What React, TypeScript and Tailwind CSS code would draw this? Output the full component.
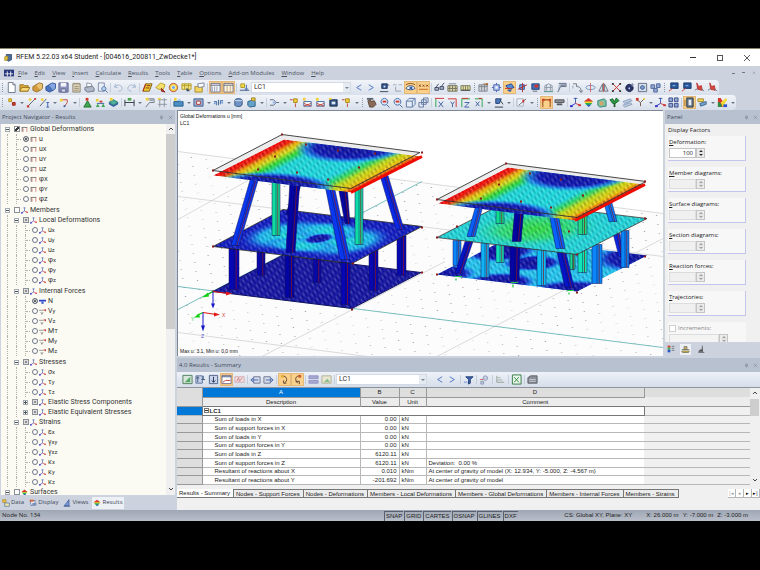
import React from 'react';

type Shape = [d: string, fill: string, stroke?: string];

// All glyphs are drawn on a 12x12 grid
const GLYPHS: Record<string, Shape[]> = {
    newDoc: [['M2.500 .5H7.500L10 3V11.500H2.500Z', '#fff', '#6b7484'], ['M7.500 .5V3H10', '#dde3ee', '#6b7484']],
    open: [['M1 3H5L6 4H10V10H1Z', '#d9a93a', '#9c7722'], ['M1 10L3 6H12L9.500 10Z', '#f7d777', '#9c7722']],
    boxGold: [['M1 5L5 3L9 4V9L5 11L1 9Z', '#d29a3c', '#9b7026'], ['M4 3L8 1L11.500 2V7L9 9', '#e9c272', '#9b7026']],
    boxBlue: [['M1 5L5 3L9 4V9L5 11L1 9Z', '#4a72bd', '#34559a'], ['M4 3L8 1L11.500 2V7L9 9', '#86a6de', '#34559a']],
    save: [['M1 1H11V11H1Z', '#8d93bd', '#5b628e'], ['M3 1H9V5H3Z', '#f4f5fb'], ['M3.500 7.500H8.500V11H3.500Z', '#d6d9e8', '#5b628e']],
    notes: [['M2 2H10V11H2Z', '#ded5bd', '#8b8371'], ['M2 1.500H10M3.500 5H8.500M3.500 7H8.500M3.500 9H8.500', 'none', '#9c9276']],
    printer: [['M3 1L8 2L9 6L3 5Z', '#fff', '#8990a3'], ['M1 6L9 4.500L11 7V10L4 11L1 9Z', '#b0b7c7', '#70788a']],
    preview: [['M1.500 1H8V10H1.500Z', '#e9eff8', '#7d8ba6'], ['M7.500 5A2.300 2.300 0 1 1 7.400 5M9 9L11.500 11.500', '#b5d2ef', '#4d6e9d']],
    undo: [['M3 2L1.500 5.500L5 6M2 5.300C5 2 9.500 3 10 7C10 9 8 10 6 10', 'none', '#9fb2d0']],
    redo: [['M9 2L10.500 5.500L7 6M10 5.300C7 2 2.500 3 2 7C2 9 4 10 6 10', 'none', '#9fb2d0']],
    sheet: [['M4 2H11L8 10H1Z', '#f2cf2d', '#7a5a18'], ['M5 4H9M4 6.500H8', 'none', '#7a2323'], ['M1 10L4 2', 'none', '#b51f1f']],
    lasso: [['M1 6L6 1L11 3L9 8L4 8Z', '#f3df6c', '#b99a20'], ['M7 7L11 11L7 10Z', '#cf3c2c', '#8a221a']],
    ring: [['M6 1.500A4.500 4.500 0 1 1 5.900 1.500', '#f1d33e', '#b33c2c'], ['M6 4A2 2 0 1 1 5.900 4', '#6d9de0', '#fff']],
    tableY: [['M1 2H11V8H1Z', '#f7e98b', '#b19b24'], ['M1 4H11M4 2V8M8 2V8', 'none', '#b19b24'], ['M6 6L10 10H6Z', '#44505f']],
    folderY: [['M1 5H9V11H1Z', '#f2d561', '#a7892c'], ['M4 2L11 1V5L5 6Z', '#fff', '#7a8598']],
    tableA: [['M1 1.500H11V11H1Z', '#f4f5f9', '#6b6f85'], ['M1 3.500H11', 'none', '#596080'], ['M2.500 5V11M5 5V11M7.500 5V11', 'none', '#9aa0b6']],
    tableB: [['M1 1.500H11V11H1Z', '#fdf5e2', '#6b6f85'], ['M1 3.500H11', 'none', '#596080'], ['M4.500 4V11M8 4V11', 'none', '#bfa67a']],
    loadCase: [['M2 2H6V6H2Z', '#f2de44', '#ae9621'], ['M1 9H11', 'none', '#3f567e'], ['M8 3V8M6.500 7L8 9L9.500 7', 'none', '#3b5ea1']],
    prev: [['M9 3L4 6L9 9', 'none', '#4672c4']],
    next: [['M3 3L8 6L3 9', 'none', '#4672c4']],
    eyeBlue: [['M3 2H9V7H3Z', '#35548a', '#1f3763'], ['M1 10.500H10M9 2L11 4', 'none', '#333f58'], ['M5 4H7V6H5Z', '#cfe0fa']],
    dims: [['M1 3H5M7 3H11', 'none', '#a5adbb'], ['M4 5V10H10', 'none', '#98a1b0']],
    eye: [['M1 7C3 3 9 3 11 7C9 9 3 9 1 7Z', '#f3f7ff', '#40517a'], ['M5 5H8V8H5Z', '#2f62b0'], ['M1 3C4 1 8 1 11 3', 'none', '#864f1e']],
    xxx: [['M1 3L3 5M3 3L1 5M5 3L7 5M7 3L5 5M9 3L11 5M11 3L9 5', 'none', '#7d3a14'], ['M1 8H11', 'none', '#c1651d']],
    glasses: [['M1 6H5V9H1ZM6.500 5H10.500V8H6.500Z', '#aeb7c9', '#3e4862'], ['M2 6L5 2M8 5L11 1', 'none', '#3e4862']],
    building: [['M1 4H11V10H1Z', '#ece4ae', '#6a6f5c'], ['M3 4V10M6 4V10M9 4V10M1 7H11', 'none', '#6a6f5c'], ['M2 2H10', 'none', '#7f8590']],
    ladder: [['M1 4H11V9H1Z', '#e8e2a5', '#777c62'], ['M3.500 4V9M6 4V9M8.500 4V9', 'none', '#777c62'], ['M1 9H11', 'none', '#444']],
    tableG: [['M1 3H10V10H1Z', '#d1d4da', '#7e838e'], ['M1 5H10M4 3V10M7 3V10', 'none', '#7e838e'], ['M5 2L11 1V4Z', '#a37345']],
    target: [['M6 1V11M1 6H11', 'none', '#4461ad'], ['M3 3H9V9H3Z', '#b8c7ef', '#4461ad'], ['M5 5H7V7H5Z', '#fff']],
    planeRed: [['M2 4L8 2L11 6L5 8Z', '#5a8bd6', '#234b8f'], ['M1 7H8', 'none', '#cb2d25'], ['M3 9L9 8L7 11Z', '#35609f']],
    planeBlue: [['M3 3H8V8H3Z', '#7ba5e0', '#274d8e'], ['M6 1V11M1 8L11 3', 'none', '#b32a2a']],
    gridRed: [['M2 2H10V8H2Z', '#466db2', '#23427c'], ['M5 3H9V6H5Z', '#d7342b'], ['M3 10H8', 'none', '#5c6473']],
    frame: [['M2 10V4L6 2L10 4V10M2 6H10M4 3V10M8 3V10', 'none', '#8d97a8'], ['M1 10.500H11', 'none', '#4d907f']],
    flag: [['M3 1.500H11V5H5L2 11', '#b8c4d6', '#5f6c80'], ['M5 3.500H10', 'none', '#5f6c80']],
    curve: [['M1 2H5V5M5 5C9 5 10 7 10 11M8 9L10 11.500L12 9', 'none', '#6a7280'], ['M1 4V7', 'none', '#989da7']],
    rotate: [['M1 6C1 3 11 3 11 6C11 9 1 9 1 6Z', 'none', '#6c8fc7'], ['M6 1V11', 'none', '#c66']],
    mirror: [['M5 2V10H1ZM7 2V10H11Z', '#dde1e8', '#6a7280'], ['M6 1V11', 'none', '#c05c50']],
    cross: [['M2 2L10 10M10 2L2 10', 'none', '#d02c23'], ['M1 1H3V3H1ZM9 1H11V3H9ZM1 9H3V11H1ZM9 9H11V11H9Z', '#343434']],
    sphere: [['M6 2.500A4 4 0 1 1 5.900 2.500', '#27346b', '#151d42'], ['M9 1V5M7 3H11', 'none', '#808ca8'], ['M5 6H6.500V8H5Z', '#dfe6fa']],
    zoomBox: [['M1.500 1.500H10.500V10.500H1.500Z', '#d6deec', '#606d86'], ['M6 4A2 2 0 1 1 5.900 4', '#7ba3df', '#27456f']],
    cluster: [['M1 3H5V7H1ZM7 2H11V6H7ZM4 7H8V11H4Z', '#8fa5d0', '#51699e']],
    flagBlue: [['M3 1H11V7H3Z', '#27569b', '#183a70'], ['M1 10L5 7', 'none', '#d83b30'], ['M5 4L8 4', 'none', '#a8c4ea']],
    loadRed: [['M3 1L5 5L8 4L9 9L4 8Z', '#d9453c', '#b8382f'], ['M1 9L4 7M8 7L11 10', 'none', '#6d7584']],
    node: [['M3 2H6V5H3Z', '#f1cf39', '#b59115'], ['M7 6H10V9H7Z', '#d63c2f', '#9a231a']],
    line: [['M2 10L10 2', 'none', '#555d6b'], ['M1 9H3.500V11.500H1ZM9 1H11V3H9Z', '#cf3b30'], ['M3 1.500H6V4H3Z', '#f1cf39']],
    lineI: [['M1 10L8 2', 'none', '#555d6b'], ['M8 6H11M9.500 6V11M8 11H11', 'none', '#3c64b2'], ['M2 1.500H5V4H2Z', '#f1cf39']],
    poly: [['M2 3H9V6L6 10', 'none', '#c14437'], ['M1 2H4V5H1Z', '#f1cf39'], ['M5 9H7V11H5Z', '#35609f']],
    support: [['M6 4L10 11H2Z', '#3da851', '#20702f'], ['M4 1H7V4H4Z', '#d6382d']],
    hinge: [['M2 7H10', 'none', '#35609f'], ['M1 2H4V5H1Z', '#f1cf39'], ['M3 7L5 11H1ZM9 7L11 11H7Z', '#3da851'], ['M5 4H8V6H5Z', '#cf3b30']],
    solid: [['M1 6L6 3L11 6L6 9Z', '#4cb09c', '#277866'], ['M1 6V8L6 11L11 8V6L6 9Z', '#35609f'], ['M2 1H5V4H2Z', '#f1cf39']],
    dimension: [['M1 3V10M11 3V10M1 6H11', 'none', '#2e333d'], ['M4 1H8V4H4Z', '#4ca54c']],
    comment: [['M4 2H11V6H6L2 11', 'none', '#6a7280'], ['M2 1H5V4H2Z', '#f1cf39'], ['M6 3.500H10', 'none', '#6a7280']],
    raster: [['M3 1V11M8 1V11M1 3H11M1 8H11', 'none', '#8b93a2'], ['M1 1H4V3H1Z', '#f1cf39']],
    surf: [['M1 5H11V10H1Z', '#4b8fc4', '#245a88'], ['M1 1H4V4H1Z', '#f1cf39'], ['M4 4L7 2L10 5', '#9cc7e4']],
    opening: [['M1 2H11V10H1Z', '#95add2', '#3e5c8c'], ['M4 4.500H8V8H4Z', '#fff', '#b5342b']],
    wave: [['M1 5H4V9M6 9V3M8 8V4H11', 'none', '#3d6299'], ['M1 6H3V8H1ZM9 5H11V7H9Z', '#6da2d9']],
    pot: [['M2 4C2 1 10 1 10 4V8C10 11 3 11 2 9Z', '#7193c4', '#33547f'], ['M2 4H10', 'none', '#d7e3f5']],
    cubeSel: [['M2 5L8 3L10 5V10L4 11L2 9Z', '#65a2cb', '#2a5c80'], ['M6 1H10V4H6Z', '#e3ca58', '#9c8320']],
    connect: [['M1 3H5L8 6L5 9H1M8 6H11', 'none', '#596680'], ['M4 5H7V7H4Z', '#8fb3e6']],
    pinY: [['M5 2H9V6H5Z', '#f1cf39', '#a8881a'], ['M7 7V11', 'none', '#c14437'], ['M1 3H4', 'none', '#b33']],
    loadY: [['M2 5H10V10H2Z', '#fff', '#35609f'], ['M2 7L10 10M2 10L10 7', 'none', '#c14437'], ['M1 1H4V4H1Z', '#f1cf39']],
    camera: [['M2 3H10V10H2Z', '#31517d', '#182f52'], ['M4 5H8V8H4Z', '#d6e6fa'], ['M1 1H4V3H1Z', '#f1cf39']],
    hand: [['M2 4L5 2V5L9 4L11 8L8 11H4Z', '#8a6a55', '#5a463a'], ['M1 1H8V3H1Z', '#5d646f']],
    magn: [['M6 1.500A3.700 3.700 0 1 1 5.900 1.500', '#dbe8f7', '#3f68a5'], ['M8.500 8.500L11.500 11.500', 'none', '#3f68a5'], ['M4 4H8V6H4Z', '#d0342a']],
    box3d: [['M1.500 4.500H8V11H1.500ZM1.500 4.500L4.500 1.500H11V8L8 11M8 4.500L11 1.500', '#e6edf8', '#5674a5']],
    boxes: [['M1 6H6V11H1ZM4 3H9V8H4ZM6 1H11V6H6Z', '#dfe7f4', '#64799f']],
    axX: [['M2 2V11', 'none', '#24a04a'], ['M1 1.500H11', 'none', '#cf2d2d'], ['M5 5L10 11M10 5L5 11', 'none', '#385c9c']],
    axY: [['M1 2H10V11', 'none', '#cf2d2d'], ['M4 5L6 8L8 5M6 8V11', 'none', '#385c9c']],
    axZ: [['M2 11V2H11', 'none', '#24a04a'], ['M2 1.500H9', 'none', '#cf2d2d'], ['M5 6H10L5 11H10', 'none', '#385c9c']],
    axXn: [['M10 11V2H2', 'none', '#24a04a'], ['M6 1.500H10', 'none', '#cf2d2d'], ['M3 5L7 10M7 5L3 10', 'none', '#385c9c']],
    micro: [['M3 2H9L7 7H3Z', '#4c7abc', '#203f6e'], ['M2 11H11M8 4L11 8', 'none', '#2c3442']],
    vector: [['M1 2H8V10H1Z', '#eef2f8', '#a6aebc'], ['M3 9L11 2', 'none', '#5f6672'], ['M7 3H9V6H7Z', '#cf3b30']],
    portal: [['M2 11V3H10V11', 'none', '#8a3a18'], ['M1 2H4V4H1ZM9 2H11V4H9Z', '#cf3b30'], ['M1 6C4 2 8 2 11 6', 'none', '#c0641e']],
    roller: [['M1 3H11V6H1Z', '#8e9096', '#55585f'], ['M3 7H9V9H3Z', '#55585f']],
    axis: [['M6 1V7M4 1.500H8', 'none', '#3d56a8'], ['M6 7L1 10', 'none', '#3232c8'], ['M6 7L11 9', 'none', '#d03434'], ['M0 9H3V11H0Z', '#3232c8'], ['M9 8H12V10H9Z', '#d03434']],
    rainbow: [['M1 5L6 1L11 5L9 6H3Z', '#d8352c'], ['M1 5H11L9 7H3Z', '#e9d736'], ['M2 6.500H10L8 9H4Z', '#2fae4e'], ['M4 8.500H9L6 11Z', '#2a55c4']],
    cubeG: [['M2 4L9 2L11 4V10L4 11L2 9Z', '#7ac3a8', '#3a826d'], ['M4 5H8V9H4Z', '#d8a466']],
    tree: [['M5 5H7V11H5Z', '#2c5b33'], ['M1 3L4 2L6 5L8 1L11 4L7 7H4Z', '#2f9a45', '#1d6a2c']],
    layers: [['M1 5L9 2L11 4L3 7ZM1 9L9 6L11 8L3 11Z', '#b9c9e0', '#8fa1bf']],
    branch: [['M2 3L6 6L10 2M6 6V10', 'none', '#6b5948'], ['M1 1H4V4H1Z', '#cf3b30'], ['M9 1H11V3H9Z', '#f1cf39']],
    fourBox: [['M1 1H5V5H1ZM7 1H11V5H7ZM1 7H5V11H1ZM7 7H11V11H7Z', '#94a7d2', '#384d85']],
    door: [['M3 1H10V11H3Z', '#66788a', '#2e3c4b'], ['M5 3H8V9H5Z', '#e8edf4'], ['M1 3V10', 'none', '#966a23']],
    swatches: [['M1 2H7V5H1Z', '#f1d95a', '#a78a27'], ['M3 7L10 5V8L4 10Z', '#72a4cf', '#3b678d']],
    colors: [['M1 1H4L7 6V11H1Z', '#d8352c'], ['M4 6L10 1L11 3L6 11Z', '#f1d833'], ['M1 5L5 8V11H1Z', '#2a8f47'], ['M7 8H11V11H7Z', '#2a55c4']],
    green: [['M1 1.500H11V10.500H1Z', '#d7e6da', '#4a7c5a'], ['M3 9L9 3V9Z', '#53a866']],
    sortA: [['M1 2H8V10H1Z', '#c9d4ea', '#586e99'], ['M3 3V9M1.500 5L3 3L4.500 5M9 2V6M7 6H11', 'none', '#3c557f']],
    sortB: [['M1.500 1.500H10.500V10.500H1.500Z', '#c9d4ea', '#4b5f88'], ['M6 3V9M4 7L6 9L8 7', 'none', '#1f2f52']],
    chart: [['M1 1.500H11V10.500H1Z', '#fff', '#6e6a8c'], ['M1 3H11', 'none', '#3f557f'], ['M2 9L5 7H10', 'none', '#c23a30']],
    redTab: [['M1 3H11V9H1Z', '#f3e2e4', '#d6a9ad'], ['M3 8L5 4L6 8L9 4', 'none', '#c98088']],
    impL: [['M4 3H11V10H4Z', '#d7dceb', '#6a748f'], ['M9 6.500H1M3.500 4L1 6.500L3.500 9', 'none', '#3e64b0']],
    impR: [['M1 3H8V10H1Z', '#d7dceb', '#6a748f'], ['M3 6.500H11M8.500 4L11 6.500L8.500 9', 'none', '#3e64b0']],
    arcR: [['M3 2C9 2 10 7 6 10M8 10H5V7', 'none', '#5b3f2a'], ['M2 1H5V4H2Z', '#e8b030']],
    arcL: [['M9 2C3 2 3 6 6 10M4 8H8V11', 'none', '#5b3f2a'], ['M7 1H10V4H7Z', '#c9582e']],
    rows: [['M1 2H11V5H1ZM1 7H11V10H1Z', '#a9a9d6', '#8f90c0']],
    pic: [['M1 2H11V10H1Z', '#e9e6d2', '#b5ae92'], ['M3 9L7 5L10 9Z', '#8fc08f']],
    funnel: [['M3 3H11L8 6V10L6 11V6Z', '#3e62a8', '#24417a'], ['M1 8H5V10H1Z', '#9fb5dc']],
    resetF: [['M2 8H5V11H2ZM7 2A2.500 2.500 0 1 1 6.900 2', '#c3cbe0', '#8b97b8'], ['M1 6H5', 'none', '#c66']],
    stat: [['M2 2V9H10', 'none', '#8e9c94'], ['M3 4H6M3 6.500H8', 'none', '#a3ada7']],
    excel: [['M1.500 1H11V11H1.500Z', '#e9f4ea', '#2f7a3e'], ['M3.500 3.500L8.500 9M8.500 3.500L3.500 9', 'none', '#2a8a3c']],
    calc: [['M1 4L4 2H11V10H1Z', '#8a8f98', '#5a5e65'], ['M2.500 6H9.500M2.500 8H9.500', 'none', '#c8ccd4']],
    deform: [['M2 10V3', 'none', '#2c2c2c'], ['M1 2.500H11', 'none', '#2c2c2c'], ['M10 10V3M3.500 10V4', 'none', '#b94a48']],
    forceN: [['M0 3H12V6H0Z', '#2a45c8'], ['M4 6H8V10H4Z', '#4363d2']],
    forceV: [['M0 4H8M3 7L5 11L7 7', 'none', '#5a5a5a'], ['M7 3L12 2V6Z', '#c43c3c']],
    data: [['M1 1H6V5H1Z', '#f1c84a', '#a98422'], ['M4 6H11V11H4Z', '#f3e6a2', '#4d6ea5']],
    display: [['M2 3L9 2V8L3 10Z', '#e9eef7', '#46649a'], ['M1 1H7V4H1Z', '#d66a3b'], ['M5 6H11V10H5Z', '#7a8fb6']],
    views: [['M2 10L9 1V10Z', '#7d9ad6', '#2b4b91'], ['M1 11H11', 'none', '#2b4b91']],
    palette: [['M1 1H5V4H1Z', '#d3362c'], ['M1 4H5V7H1Z', '#3ab44a'], ['M1 7H5V11H1Z', '#2a55c4'], ['M7 2H11M7 5H11M7 8H11', 'none', '#555']],
    scale: [['M1 8H11L10 10H2Z', '#e6c64c', '#6d6b50'], ['M4 2H8V6H4Z', '#c9a95a', '#777'], ['M1 6H11', 'none', '#6d6b50']],
    scope: [['M8 1V8M2 11H11M4 9L8 5', 'none', '#333'], ['M4 7H9V10H2Z', '#555']],
    app: [['M3 2H10V9L6 11L3 9Z', '#4a6b9c', '#2b436a'], ['M1 5L5 4V9L1 10Z', '#e8c63d', '#a4891f']],
    mdi: [['M0 2H12V10H0Z', '#26377a'], ['M1 7H11M4 4V10M8 4V10', 'none', '#fff']],
    pin: [['M4 2H8V7H4ZM2.500 7H9.500M6 7V11', 'none', '#6d7686']],
    close: [['M2 2L10 10M10 2L2 10', 'none', '#6d7686']],
};

const Glyph: React.FC<{ name: string; className?: string }> = ({ name, className = 'h-3 w-3' }) => (
    <svg viewBox="0 0 12 12" className={`${className} shrink-0`} aria-hidden="true">
        {GLYPHS[name].map(([d, fill, stroke], i) => (
            <path key={i} d={d} fill={fill} stroke={stroke} strokeWidth={stroke ? 1 : 0} />
        ))}
    </svg>
);

// "|" separator, ":" grip, "v" drop-down arrow, leading "*" pressed button
const ToolItems: React.FC<{ items: string }> = ({ items }) => (
    <>
        {items.split(' ').map((item, i) => {
            if (item === '|') return <span key={i} className="mx-px h-[9px] w-px shrink-0 bg-[#c6cedb]" />;
            if (item === ':') return <span key={i} className="mx-[2px] h-[9px] shrink-0 border-l border-dotted border-[#8d97ab]" />;
            if (item === 'v') {
                return (
                    <button key={i} aria-label="More" className="flex h-[13px] w-[7px] shrink-0 items-center justify-center">
                        <svg viewBox="0 0 4 2" className="h-[2px] w-1"><path d="M0 0H4L2 2Z" fill="#6d7788" /></svg>
                    </button>
                );
            }
            const pressed = item.startsWith('*');
            const name = pressed ? item.slice(1) : item;
            return (
                <button
                    key={i}
                    aria-label={name}
                    className={`flex h-[13px] w-[13px] shrink-0 items-center justify-center ${pressed ? 'border border-[#e3b878] bg-[#fbd08a]' : ''}`}
                >
                    <Glyph name={name} className="h-[11px] w-[11px]" />
                </button>
            );
        })}
    </>
);

const LoadCaseSelect: React.FC<{ className: string }> = ({ className }) => (
    <div className={`relative shrink-0 font-['Roboto',sans-serif] ${className}`}>
        <select aria-label="Load case" className="block h-[11px] w-full appearance-none border border-[#d3dae6] bg-white pl-[2px] text-[7px] leading-[9px] text-[#333]">
            <option>LC1</option>
        </select>
        <span className="pointer-events-none absolute inset-y-px right-px flex w-[7px] items-center justify-center bg-[#e6eaf1]">
            <svg viewBox="0 0 4 2" className="h-[2px] w-1"><path d="M0 0H4L2 2Z" fill="#7b8494" /></svg>
        </span>
    </div>
);

const PanelHeader: React.FC<{ title: string }> = ({ title }) => (
    <div className="flex h-[14px] shrink-0 items-center bg-[#b8c1d0] px-[2px] text-[6px] text-[#434c5c]">
        <h2 className="flex-1">{title}</h2>
        <button aria-label="Auto hide" className="mr-1"><Glyph name="pin" className="h-[5px] w-[5px]" /></button>
        <button aria-label="Close"><Glyph name="close" className="h-[5px] w-[5px]" /></button>
    </div>
);

interface TreeRow {
    depth: number;
    icon: string;
    base: string;
    sub?: string;
    control: 'radio' | 'on' | 'off' | 'mixed';
    fold?: '-' | '+';
    selected?: boolean;
    spaced?: boolean;
}

const leaves = (depth: number, icon: string, names: string[]): TreeRow[] =>
    names.map(n => ({ depth, icon, base: n[0], sub: n.slice(1), control: 'radio' }));

const TREE: TreeRow[] = [
    { depth: 0, icon: 'deform', base: 'Global Deformations', control: 'on', fold: '-' },
    { depth: 1, icon: 'deform', base: 'u', control: 'radio', selected: true },
    ...leaves(1, 'deform', ['uX', 'uY', 'uZ', 'φX', 'φY', 'φZ']),
    { depth: 0, icon: 'axis', base: 'Members', control: 'off', fold: '-', spaced: true },
    { depth: 1, icon: 'axis', base: 'Local Deformations', control: 'mixed', fold: '-' },
    ...leaves(2, 'axis', ['ux', 'uy', 'uz', 'φx', 'φy', 'φz']),
    { depth: 1, icon: 'axis', base: 'Internal Forces', control: 'mixed', fold: '-', spaced: true },
    { depth: 2, icon: 'forceN', base: 'N', control: 'radio', selected: true },
    ...leaves(2, 'forceV', ['Vy', 'Vz', 'MT', 'My', 'Mz']),
    { depth: 1, icon: 'axis', base: 'Stresses', control: 'mixed', fold: '-', spaced: true },
    ...leaves(2, 'axis', ['σx', 'τy', 'τz']),
    { depth: 2, icon: 'axis', base: 'Elastic Stress Components', control: 'mixed', fold: '+' },
    { depth: 2, icon: 'axis', base: 'Elastic Equivalent Stresses', control: 'mixed', fold: '+' },
    { depth: 1, icon: 'axis', base: 'Strains', control: 'mixed', fold: '-' },
    ...leaves(2, 'axis', ['εx', 'γxy', 'γxz', 'κx', 'κy', 'κz']),
    { depth: 0, icon: 'rainbow', base: 'Surfaces', control: 'off', fold: '-' },
];

const TreeItem: React.FC<{ row: TreeRow; id: string }> = ({ row, id }) => (
    <li className={`flex h-[10px] shrink-0 items-center pl-[2px] ${row.spaced ? 'mt-px' : ''}`}>
        {Array.from({ length: row.depth }, (_, i) => (
            <span key={i} className="ml-1 h-full w-[5px] border-l border-dotted border-[#b3b3ac]" />
        ))}
        {row.fold ? (
            <button aria-label="Toggle" className="mx-[2px] flex h-[5px] w-[5px] items-center justify-center border border-[#a5a9b2] bg-white">
                <svg viewBox="0 0 3 3" className="h-[3px] w-[3px]">
                    <path d={row.fold === '+' ? 'M0 1.500H3M1.500 0V3' : 'M0 1.500H3'} stroke="#455" strokeWidth={1} />
                </svg>
            </button>
        ) : (
            <span className="ml-1 flex h-full w-[5px] items-center border-l border-dotted border-[#b3b3ac]">
                <span className="w-full border-t border-dotted border-[#b3b3ac]" />
            </span>
        )}
        <input
            id={id}
            type={row.control === 'radio' ? 'radio' : 'checkbox'}
            name={row.control === 'radio' ? `${id}-choice` : undefined}
            defaultChecked={row.control === 'radio' ? row.selected : row.control !== 'off'}
            className={`mr-px ml-[2px] h-[6px] w-[6px] shrink-0 appearance-none border ${
                row.control === 'radio'
                    ? 'rounded-full border-[#6f7683] bg-white checked:bg-[#333] checked:shadow-[inset_0_0_0_1px_#fff]'
                    : row.control === 'mixed'
                        ? 'border-[#8b8f96] bg-[#8f8f8f] shadow-[inset_0_0_0_1px_#ddd]'
                        : 'border-[#8b8f96] bg-white checked:bg-[linear-gradient(135deg,#fff_35%,#333_35%,#333_70%,#fff_70%)]'
            }`}
        />
        <Glyph name={row.icon} className="mr-[2px] h-[7px] w-[7px]" />
        <label htmlFor={id} className="font-['Roboto','Noto_Sans',sans-serif] text-[7px] leading-[10px] whitespace-nowrap text-[#333]">
            {row.base}
            {row.sub && <span className="text-[6px]">{row.sub}</span>}
        </label>
    </li>
);

type Pt = [number, number];

// A slab drawn in its own 100x100 space; left, front and back are its corner points
const Slab: React.FC<{ left: Pt; front: Pt; back: Pt; children: React.ReactNode }> = ({ left, front, back, children }) => {
    const [a, b] = [(front[0] - left[0]) / 100, (front[1] - left[1]) / 100];
    const [c, d] = [(back[0] - left[0]) / 100, (back[1] - left[1]) / 100];
    return (
        <g transform={`matrix(${a} ${b} ${c} ${d} ${left[0]} ${left[1]})`} clipPath="url(#slabClip)">
            {children}
            <rect width="100" height="100" fill="url(#mesh)" />
        </g>
    );
};

const outline = (left: Pt, front: Pt, back: Pt) =>
    `${left} ${front} ${front[0] + back[0] - left[0]},${front[1] + back[1] - left[1]} ${back}`;

// [left x, right x, y] at the top, then the same at the foot, then colour
type Col = [number, number, number, number, number, number, string];

const Columns: React.FC<{ cols: Col[] }> = ({ cols }) => (
    <>
        {cols.map(([a, b, y1, c, d, y2, fill], i) => (
            <g key={i}>
                <polygon points={`${a},${y1} ${b},${y1} ${d},${y2} ${c},${y2}`} fill={fill} stroke="#10105a" strokeWidth=".5" />
                <path d={`M${a + (b - a) * 0.5} ${y1}L${c + (d - c) * 0.5} ${y2}`} stroke="#08104a" strokeWidth=".7" opacity=".6" />
                <path d={`M${a + (b - a) * 0.72} ${y1}L${c + (d - c) * 0.72} ${y2}`} stroke="#8c1616" strokeWidth="1" opacity=".7" />
            </g>
        ))}
    </>
);

const TopSlab: React.FC<{ left: Pt; front: Pt; back: Pt }> = props => (
    <>
        <Slab {...props}>
            <rect width="100" height="100" fill="url(#bands)" />
            <ellipse cx="47" cy="-4" rx="41" ry="32" fill="url(#blueSpot)" />
            <ellipse cx="49" cy="102" rx="37" ry="42" fill="url(#blueSpot)" />
        </Slab>
        <path
            d={`M${props.front}L${props.front[0] + props.back[0] - props.left[0]} ${props.front[1] + props.back[1] - props.left[1]}`}
            stroke="#f00a00"
            strokeWidth="3"
        />
    </>
);

const LOWER_1: Col[] = [
    [257, 265, 250, 257, 265, 276, '#0808a8'], [313, 321, 250, 313, 321, 283, '#0808a8'], [369, 378, 250, 369, 378, 291, '#0808b0'],
    [397, 406, 236, 397, 406, 276, '#0808b0'], [229, 239, 247, 229, 239, 290, '#0606b4'], [285, 294, 254, 285, 294, 298, '#0404a4'],
    [341, 350, 262, 341, 350, 305, '#0606b4'],
];
const UPPER_1: Col[] = [
    [297, 303, 178, 286, 292, 215, '#0404a0'], [338, 347, 186, 345, 350, 224, '#0404a0'], [272, 280, 174, 272, 280, 236, '#10dca0'],
    [252, 260, 174, 231, 239, 246, '#0a38ee'], [290, 300, 180, 286, 295, 253, '#0404a4'], [355, 363, 188, 355, 363, 245, '#10dca8'],
    [325, 334, 186, 340, 350, 260, '#0a38ee'], [380, 388, 176, 396, 404, 230, '#0a28e6'],
];
const LOWER_2: Col[] = [
    [453, 461, 241, 453, 461, 266, '#0a86fa'], [496, 504, 245, 496, 504, 263, '#10e0b8'], [570, 575, 253, 570, 575, 270, '#18d890'],
    [613, 620, 234, 619, 623, 257, '#0a28e6'], [578, 587, 250, 578, 587, 273, '#10e8b8'], [621, 629, 231, 621, 629, 268, '#0a86fa'],
    [465, 473, 242, 455, 462, 274, '#0614c8'], [481, 489, 243, 481, 489, 278, '#10b4f4'], [510, 520, 246, 510, 519, 281, '#0404a4'],
    [537, 546, 250, 537, 546, 286, '#10bcf4'], [557, 566, 253, 565, 574, 288, '#0614c8'], [592, 602, 245, 592, 602, 284, '#0a86fa'],
];
const UPPER_2: Col[] = [
    [496, 504, 204, 496, 504, 224, '#10dc90'], [578, 587, 214, 578, 587, 235, '#20d880'], [477, 484, 202, 467, 475, 237, '#0a60fa'],
    [515, 524, 208, 512, 521, 242, '#0404a0'], [549, 558, 214, 556, 565, 249, '#0a60fa'], [603, 611, 200, 609, 617, 222, '#0a78fa'],
];

const NODES: Pt[] = [
    [282, 135], [422, 153], [213, 171], [306, 145], [338, 151], [375, 154], [275, 157], [359, 168], [258, 170], [297, 173], [328, 180],
    [213, 247], [422, 228], [353, 264], [213, 292], [422, 273], [352, 310], [506, 164], [645, 182], [437, 200], [530, 174], [561, 180],
    [499, 185], [583, 196], [481, 199], [521, 202], [551, 208], [437, 238], [645, 219], [577, 255], [437, 275], [645, 257], [577, 293], [569, 232], [457, 227],
];

const Model: React.FC = () => (
    <svg viewBox="178 111 485 246" preserveAspectRatio="xMidYMid slice" className="h-full w-full" role="img" aria-label="Deformed model">
        <defs>
            <clipPath id="slabClip"><rect width="100" height="100" /></clipPath>
            <pattern id="mesh" width="3" height="5" patternUnits="userSpaceOnUse">
                <path d="M0 1H1.500M1.500 3.500H3" stroke="#fff" strokeWidth="1.200" opacity=".28" />
                <path d="M0 3.500H1.500M1.500 1H3" stroke="#101050" strokeWidth="1.200" opacity=".3" />
            </pattern>
            <pattern id="dots" width="15" height="15" patternUnits="userSpaceOnUse" patternTransform="matrix(1 .125 .9 -.47 213 292)">
                <path d="M0 0H1V1.500H0Z" fill="#a0a0a0" />
            </pattern>
            <linearGradient id="bands">
                <stop offset="0" stopColor="#f00" />
                <stop offset=".06" stopColor="#f21c00" />
                <stop offset=".11" stopColor="#f0b000" />
                <stop offset=".16" stopColor="#d8e010" />
                <stop offset=".23" stopColor="#28dc30" />
                <stop offset=".31" stopColor="#18dcd8" />
                <stop offset=".7" stopColor="#18dce0" />
                <stop offset=".77" stopColor="#28dc60" />
                <stop offset=".84" stopColor="#c0e010" />
                <stop offset=".93" stopColor="#f0c800" />
                <stop offset=".98" stopColor="#f04000" />
                <stop offset="1" stopColor="#f00" />
            </linearGradient>
            <radialGradient id="blueSpot">
                <stop offset="0" stopColor="#0a0a96" />
                <stop offset=".65" stopColor="#0a14b4" />
                <stop offset=".82" stopColor="#1478f0" stopOpacity=".85" />
                <stop offset="1" stopColor="#18c8f0" stopOpacity="0" />
            </radialGradient>
            <radialGradient id="cyanSpot">
                <stop offset="0" stopColor="#18e4dc" />
                <stop offset=".6" stopColor="#18b8f0" />
                <stop offset="1" stopColor="#1050f0" stopOpacity="0" />
            </radialGradient>
            <radialGradient id="greenSpot">
                <stop offset="0" stopColor="#30e038" />
                <stop offset=".5" stopColor="#28e078" />
                <stop offset="1" stopColor="#18dcd8" stopOpacity="0" />
            </radialGradient>
        </defs>

        {/* work plane */}
        <rect x="178" y="111" width="485" height="246" fill="#fff" />
        <polygon points="178,152 663,214 663,357 178,357" fill="#fcfcfc" />
        <polygon points="178,152 663,214 663,357 178,357" fill="url(#dots)" />
        <path d="M178 152L663 214M178 197L663 257M178 333L368 357M178 220L248 181M262 357L445 262M437 357L663 239" stroke="#d2d2d2" strokeWidth=".8" fill="none" />
        <path d="M178 287L663 348M178 310L422 182" stroke="#58aeb0" strokeWidth=".8" fill="none" />

        {/* first model */}
        <Slab left={[213, 292]} front={[352, 309]} back={[282, 256]}><rect width="100" height="100" fill="#1010a0" /></Slab>
        <polygon points={outline([213, 292], [352, 309], [282, 256])} fill="none" stroke="#101060" strokeWidth="1" />
        <Columns cols={LOWER_1} />
        <Slab left={[213, 247]} front={[352, 264]} back={[283, 210]}>
            <rect width="100" height="100" fill="#0c18c0" />
            <ellipse cx="30" cy="46" rx="26" ry="40" fill="url(#cyanSpot)" />
            <ellipse cx="72" cy="46" rx="26" ry="40" fill="url(#cyanSpot)" />
            <ellipse cx="50" cy="66" rx="26" ry="22" fill="url(#cyanSpot)" />
            <ellipse cx="50" cy="26" rx="26" ry="18" fill="url(#cyanSpot)" />
            <ellipse cx="53" cy="46" rx="9" ry="14" fill="url(#blueSpot)" />
        </Slab>
        <polygon points={outline([213, 247], [352, 264], [283, 210])} fill="none" stroke="#222" strokeWidth=".8" />
        <Columns cols={UPPER_1} />
        <polygon points={outline([213, 171], [351, 189], [282, 135])} fill="#ececec" />
        <TopSlab left={[213, 176]} front={[351, 193]} back={[284, 140]} />
        <polygon points={outline([213, 171], [351, 189], [282, 135])} fill="none" stroke="#333" strokeWidth=".9" />

        {/* second model */}
        <Slab left={[437, 275]} front={[577, 292]} back={[507, 239]}>
            <rect width="100" height="100" fill="#20c8f0" />
            <ellipse cx="0" cy="0" rx="26" ry="30" fill="url(#blueSpot)" />
            <ellipse cx="45" cy="0" rx="24" ry="26" fill="url(#blueSpot)" />
            <ellipse cx="100" cy="0" rx="34" ry="30" fill="url(#blueSpot)" />
            <ellipse cx="42" cy="52" rx="20" ry="22" fill="url(#blueSpot)" />
            <ellipse cx="100" cy="98" rx="34" ry="44" fill="url(#blueSpot)" />
            <ellipse cx="10" cy="70" rx="24" ry="30" fill="url(#blueSpot)" />
        </Slab>
        <Columns cols={LOWER_2} />
        <Slab left={[437, 238]} front={[577, 255]} back={[507, 202]}>
            <rect width="100" height="100" fill="#1cd8d8" />
            <ellipse cx="47" cy="46" rx="42" ry="52" fill="url(#greenSpot)" />
        </Slab>
        <polygon points={outline([437, 238], [577, 255], [507, 202])} fill="none" stroke="#333" strokeWidth=".8" />
        <Columns cols={UPPER_2} />
        <polygon points={outline([437, 200], [577, 218], [506, 164])} fill="#ececec" />
        <TopSlab left={[438, 204]} front={[575, 221]} back={[508, 168]} />
        <polygon points={outline([437, 200], [577, 218], [506, 164])} fill="none" stroke="#333" strokeWidth=".9" />
        <path d="M455 277H462M456 279V281M511 283H518M513 285V288M567 291H574M569 293V295" stroke="#20c840" strokeWidth="1.200" />

        {NODES.map(([x, y], i) => <rect key={i} x={x - 1} y={y - 1} width="2" height="2" fill="#8a1a1a" />)}

        {/* axis systems */}
        <path d="M213 292L228 294M203 313L216 315" stroke="#e01818" strokeWidth="1.200" />
        <path d="M226 292L232 294L226 296ZM214 313L220 315L214 317Z" fill="#e01818" />
        <path d="M213 292L206 296M203 313L197 316" stroke="#18b818" strokeWidth="1.200" />
        <path d="M208 293L202 298L209 297ZM199 314L194 318L200 318Z" fill="#10d010" />
        <path d="M213 292V305M203 313V328" stroke="#1818c8" strokeWidth="1" />
        <path d="M211 304H215L213 309ZM201 326H205L203 332Z" fill="#1818c8" />
        <g className="font-['Liberation_Sans',sans-serif] text-[5px]">
            <text x="222" y="317" fill="#e04040">X</text>
            <text x="191" y="321" fill="#30c830">Y</text>
            <text x="201" y="338" fill="#5050d8">Z</text>
            <text x="180" y="118" fill="#111">Global Deformations u [mm]</text>
            <text x="180" y="125" fill="#111">LC1</text>
            <text x="180" y="353" fill="#111">Max u: 3.1, Min u: 0.0 mm</text>
        </g>
    </svg>
);

const FACTORS = [
    { label: 'Deformation:', value: '100' },
    { label: 'Member diagrams:' },
    { label: 'Surface diagrams:' },
    { label: 'Section diagrams:' },
    { label: 'Reaction forces:' },
    { label: 'Trajectories:' },
];

const Spinner: React.FC<{ active?: boolean }> = ({ active }) => (
    <button aria-label="Step" disabled={!active} className="flex h-[10px] w-[9px] shrink-0 items-center justify-center border border-[#c4c4c4] bg-[#ececec]">
        <svg viewBox="0 0 6 8" className="h-2 w-1.5"><path d="M1 3H5L3 1ZM1 5H5L3 7ZM0 4H6" fill={active ? '#111' : '#9a9a9a'} stroke="#ccc" strokeWidth=".3" /></svg>
    </button>
);

const FactorPanel: React.FC = () => (
    <aside className="flex w-[95px] shrink-0 flex-col text-[6px] text-[#222]">
        <PanelHeader title="Panel" />
        <div className="min-h-0 flex-1 overflow-hidden bg-[#f0f0f0] pr-[14px] pl-[3px]">
            <p className="h-3 leading-3">Display Factors</p>
            <div className="flex flex-col gap-[6px]">
                {FACTORS.map(({ label, value }) => (
                    <div key={label} className="h-[25px] border-r border-b border-[#c3c5ec] bg-[#f7f7f7] pl-px">
                        <label htmlFor={label} className="block h-[12px] leading-[12px]">
                            <span className="underline">{label[0]}</span>{label.slice(1)}
                        </label>
                        <div className="flex">
                            <input
                                id={label}
                                defaultValue={value}
                                disabled={!value}
                                className="h-[10px] w-[27px] border border-[#c4c4c4] bg-white pr-[2px] text-right text-[6px] leading-[8px] disabled:border-[#dcdcdc] disabled:bg-[#f0f0f0]"
                            />
                            <Spinner active={!!value} />
                        </div>
                    </div>
                ))}
                <div className="h-[25px] bg-[#f7f7f7] pl-px text-[#888]">
                    <label className="flex h-[12px] items-center gap-[2px]">
                        <input type="checkbox" className="h-[7px] w-[7px] appearance-none border border-[#d0d0d0] bg-white" />
                        Increments:
                    </label>
                    <div className="flex">
                        <select aria-label="Increment" disabled className="h-[10px] w-[50px] appearance-none border border-[#dcdcdc] bg-[#f4f4f4] text-[6px]" />
                        <Spinner />
                    </div>
                </div>
            </div>
        </div>
        <div className="flex h-[14px] shrink-0 items-center gap-1 bg-[#ccd3df] pl-px">
            <button aria-label="Colours" className="px-px"><Glyph name="palette" className="h-2 w-2" /></button>
            <button aria-label="Factors" className="bg-[#edf0f4] p-px"><Glyph name="scale" className="h-[9px] w-[9px]" /></button>
            <button aria-label="Filter" className="px-[2px]"><Glyph name="scope" className="h-2 w-2" /></button>
        </div>
    </aside>
);

const RESULTS = [
    ['Sum of loads in X', '0.00', 'kN', ''],
    ['Sum of support forces in X', '0.00', 'kN', ''],
    ['Sum of loads in Y', '0.00', 'kN', ''],
    ['Sum of support forces in Y', '0.00', 'kN', ''],
    ['Sum of loads in Z', '6120.11', 'kN', ''],
    ['Sum of support forces in Z', '6120.11', 'kN', 'Deviation:  0.00 %'],
    ['Resultant of reactions about X', '0.010', 'kNm', 'At center of gravity of model (X: 12.934, Y: -5.000, Z: -4.567 m)'],
    ['Resultant of reactions about Y', '-201.692', 'kNm', 'At center of gravity of model'],
];

const SHEETS = [
    'Results - Summary', 'Nodes - Support Forces', 'Nodes - Deformations', 'Members - Local Deformations',
    'Members - Global Deformations', 'Members - Internal Forces', 'Members - Strains',
];

const Chevron: React.FC<{ up?: boolean }> = ({ up }) => (
    <svg viewBox="0 0 6 6" className="h-[6px] w-[6px] shrink-0">
        <path d={up ? 'M1 4L3 2L5 4' : 'M1 2L3 4L5 2'} fill="none" stroke="#444" />
    </svg>
);

const ResultsTable: React.FC = () => (
    <section className="mt-[2px] flex shrink-0 flex-col">
        <PanelHeader title="4.0 Results - Summary" />
        <div className="flex h-[15px] items-center bg-gradient-to-b from-[#eef2f8] to-[#d6deea] pl-1">
            <ToolItems items="green sortA sortB *chart redTab | impL impR | *arcR *arcL | rows pic |" />
            <LoadCaseSelect className="mr-[6px] w-[91px]" />
            <ToolItems items="prev next | funnel | resetF | stat | excel | calc" />
        </div>
        <div className="flex border-t border-[#8f949c] bg-[#f0f0f0] font-['Liberation_Sans',Arial,sans-serif] text-[6px]">
            <table className="h-[97px] flex-1 table-fixed border-collapse leading-[6px] text-[#222]">
                <colgroup>
                    <col className="w-[25px]" />
                    <col className="w-[158px]" />
                    <col className="w-[39px]" />
                    <col className="w-[27px]" />
                    <col className="w-[218px]" />
                    <col />
                </colgroup>
                <thead>
                    <tr className="h-[9px] bg-[#dedede]">
                        <td className="border-r border-[#999]" />
                        <th className="border-r border-b border-[#999] bg-[#0078d7] font-normal text-white">A</th>
                        <th className="border-r border-b border-[#999] font-normal">B</th>
                        <th className="border-r border-b border-[#999] font-normal">C</th>
                        <th className="border-r border-b border-[#999] font-normal">D</th>
                        <td />
                    </tr>
                    <tr className="h-[9px] border-b border-[#999] bg-[#ececec]">
                        <td className="border-r border-[#999] bg-[#dedede]" />
                        <th className="border-r border-[#999] font-normal">Description</th>
                        <th className="border-r border-[#999] font-normal">Value</th>
                        <th className="border-r border-[#999] font-normal">Unit</th>
                        <th className="font-normal">Comment</th>
                        <td />
                    </tr>
                </thead>
                <tbody>
                    <tr className="h-[9px] border-b border-[#b8b8b8] bg-white">
                        <td className="bg-[#0078d7]" />
                        <td colSpan={4} className="border border-[#777] pl-px font-bold">
                            <span className="flex items-center gap-px">
                                <button aria-label="Collapse" className="flex h-[5px] w-[5px] items-center border border-[#777]"><span className="h-px w-full bg-[#333]" /></button>
                                LC1
                            </span>
                        </td>
                        <td className="bg-[#f0f0f0]" />
                    </tr>
                    {RESULTS.map(([name, value, unit, comment]) => (
                        <tr key={name} className="border-b border-[#b8b8b8] bg-white">
                            <td className="border-r border-b border-[#999] bg-[#dedede]" />
                            <td className="border-r border-[#b8b8b8] pl-3 whitespace-nowrap">{name}</td>
                            <td className="border-r border-[#b8b8b8] pr-[2px] text-right">{value}</td>
                            <td className="border-r border-[#b8b8b8] pl-[2px]">{unit}</td>
                            <td className="pl-[2px] whitespace-pre">{comment}</td>
                            <td className="bg-[#f0f0f0]" />
                        </tr>
                    ))}
                </tbody>
            </table>
            <div className="mr-px flex w-[9px] flex-col items-center justify-between py-[2px]">
                <div className="flex w-full flex-col items-center gap-[3px]">
                    <Chevron up />
                    <div className="h-[17px] w-full bg-[#cdcdcd]" />
                </div>
                <Chevron />
            </div>
        </div>
        <div className="flex h-[25px] items-start bg-[#f0f0f0] pt-1 font-['Liberation_Sans',Arial,sans-serif] text-[6px] text-[#222]">
            {SHEETS.map((sheet, i) => (
                <button
                    key={sheet}
                    className={`h-[9px] shrink-0 border-r border-b border-[#777] pr-[3px] pl-[2px] leading-[8px] whitespace-nowrap ${i === 0 ? 'bg-white' : 'border-t bg-[#ececec]'}`}
                >
                    {sheet}
                </button>
            ))}
            <div className="ml-auto flex text-[5px]">
                {['|◂', '◂', '▸', '▸|'].map((t, i) => (
                    <button key={t} aria-label="Scroll sheets" className={`h-[9px] w-2 border-r border-b border-[#b5b5b5] bg-white leading-[7px] ${i < 2 ? 'text-[#999]' : 'text-black'}`}>{t}</button>
                ))}
            </div>
        </div>
    </section>
);

const MENU = ['File', 'Edit', 'View', 'Insert', 'Calculate', 'Results', 'Tools', 'Table', 'Options', 'Add-on Modules', 'Window', 'Help'];
const NAV_TABS = [['data', 'Data'], ['display', 'Display'], ['views', 'Views'], ['rainbow', 'Results']];

const App: React.FC = () => (
    <div className="flex h-screen flex-col bg-black pt-12 pb-[49px] font-['Open_Sans','Noto_Sans',sans-serif]">
        <div className="flex min-h-0 flex-1 flex-col overflow-hidden border-t border-[#8a8468] bg-[#ccd3df]">
            <header className="flex h-[17px] shrink-0 items-center bg-white pl-1 font-['Roboto',sans-serif] text-[7px] text-[#222]">
                <Glyph name="app" className="mr-[3px] h-[9px] w-[9px]" />
                <h1 className="flex-1">RFEM 5.22.03 x64 Student - [004616_200811_ZwDecke1*]</h1>
                <button aria-label="Minimize" className="flex w-[27px] justify-center"><span className="h-px w-[6px] bg-[#333]" /></button>
                <button aria-label="Maximize" className="flex w-[27px] justify-center"><span className="h-[6px] w-[6px] border border-[#555]" /></button>
                <button aria-label="Close" className="flex w-[27px] justify-center">
                    <svg viewBox="0 0 6 6" className="h-[6px] w-[6px]"><path d="M0 0L6 6M6 0L0 6" stroke="#333" strokeWidth=".8" /></svg>
                </button>
            </header>
            <nav className="flex h-[14px] shrink-0 items-center gap-[7px] pl-1 text-[6px] text-[#4a5262]">
                <Glyph name="mdi" className="-mr-[3px] h-[10px] w-[10px]" />
                {MENU.map(m => <button key={m} className="whitespace-nowrap"><span className="underline">{m[0]}</span>{m.slice(1)}</button>)}
                <span className="ml-auto flex items-center gap-[7px] pr-1">
                    <button aria-label="Minimize document" className="h-px w-[3px] bg-[#777]" />
                    <button aria-label="Restore document" className="h-[3px] w-[3px] border-t border-[#777]" />
                    <button aria-label="Close document"><Glyph name="close" className="h-1 w-1" /></button>
                </span>
            </nav>
            <div className="flex h-[15px] shrink-0">
                <div className="flex items-center rounded-r bg-gradient-to-b from-[#f1f4f9] to-[#d9e0eb]">
                    <ToolItems items=": newDoc open boxGold boxBlue save notes printer preview | undo redo | sheet lasso ring tableY folderY | *tableA *tableB | loadCase" />
                    <LoadCaseSelect className="mr-px w-[100px]" />
                    <ToolItems items="prev next eyeBlue dims *eye *xxx | glasses building ladder : tableG target *planeRed planeBlue gridRed frame flag | curve rotate mirror cross sphere zoomBox cluster : flagBlue flagBlue loadRed loadRed" />
                </div>
            </div>
            <div className="flex h-[15px] shrink-0">
                <div className="flex items-center rounded-r bg-gradient-to-b from-[#f1f4f9] to-[#d9e0eb]">
                    <ToolItems items=": node v line lineI v poly v | support hinge solid | dimension v comment raster | surf v opening v wave v pot cubeSel v | connect v pinY loadY loadY camera pinY v : hand magn magn box3d boxes | axX axY axZ axXn v micro v | vector v : *portal roller | axis rainbow cubeG tree layers branch v axis fourBox | *door swatches v colors v" />
                </div>
            </div>

            <main className="flex min-h-0 flex-1">
                <aside className="mr-[2px] flex w-[175px] shrink-0 flex-col">
                    <PanelHeader title="Project Navigator - Results" />
                    <div className="ml-px flex min-h-0 flex-1 bg-[#fbfbf3]">
                        <ul className="min-w-0 flex-1 overflow-hidden">
                            {TREE.map((row, i) => <TreeItem key={i} row={row} id={`node-${i}`} />)}
                        </ul>
                        <div className="flex w-[9px] shrink-0 flex-col items-center bg-[#f0f0f0] pt-[2px] pb-[3px]">
                            <Chevron up />
                            <div className="mt-[2px] h-[195px] w-full bg-[#cdcdcd]" />
                            <span className="flex-1" />
                            <Chevron />
                        </div>
                    </div>
                    <div className="flex h-[15px] shrink-0 items-center gap-[3px] pl-px text-[6px] text-[#3d4656]">
                        {NAV_TABS.map(([icon, name]) => (
                            <button key={name} className={`flex h-[12px] items-center gap-px px-px ${name === 'Results' ? 'bg-[#edf1f6]' : ''}`}>
                                <Glyph name={icon} className="h-[8px] w-[8px]" />{name}
                            </button>
                        ))}
                    </div>
                </aside>
                <div className="flex min-w-0 flex-1 flex-col">
                    <div className="flex min-h-0 flex-1">
                        <div className="mr-[2px] min-w-0 flex-1 overflow-hidden border-t border-l border-[#7f8794] bg-white"><Model /></div>
                        <FactorPanel />
                    </div>
                    <ResultsTable />
                </div>
            </main>

            <footer className="flex h-[11px] shrink-0 items-center bg-gradient-to-b from-[#9fa7b4] to-[#b9bfca] pl-[2px] font-['Liberation_Sans',Arial,sans-serif] text-[6px] text-[#222]">
                <span className="w-[382px] font-['Open_Sans',sans-serif]">Node No. 134</span>
                <div className="flex gap-px">
                    {['SNAP', 'GRID', 'CARTES', 'OSNAP', 'GLINES', 'DXF'].map(s => (
                        <button key={s} className="h-[10px] border-t border-l border-[#596170] px-px leading-[8px]">{s}</button>
                    ))}
                </div>
                <div className="ml-auto flex items-center gap-1 pr-3">
                    <span className="pr-[10px]">CS: Global XY, Plane: XY</span>
                    <span>X:  26.000 m</span>
                    <span>Y:  -7.000 m</span>
                    <span>Z:  -3.000 m</span>
                </div>
            </footer>
        </div>
    </div>
);

export default App;
